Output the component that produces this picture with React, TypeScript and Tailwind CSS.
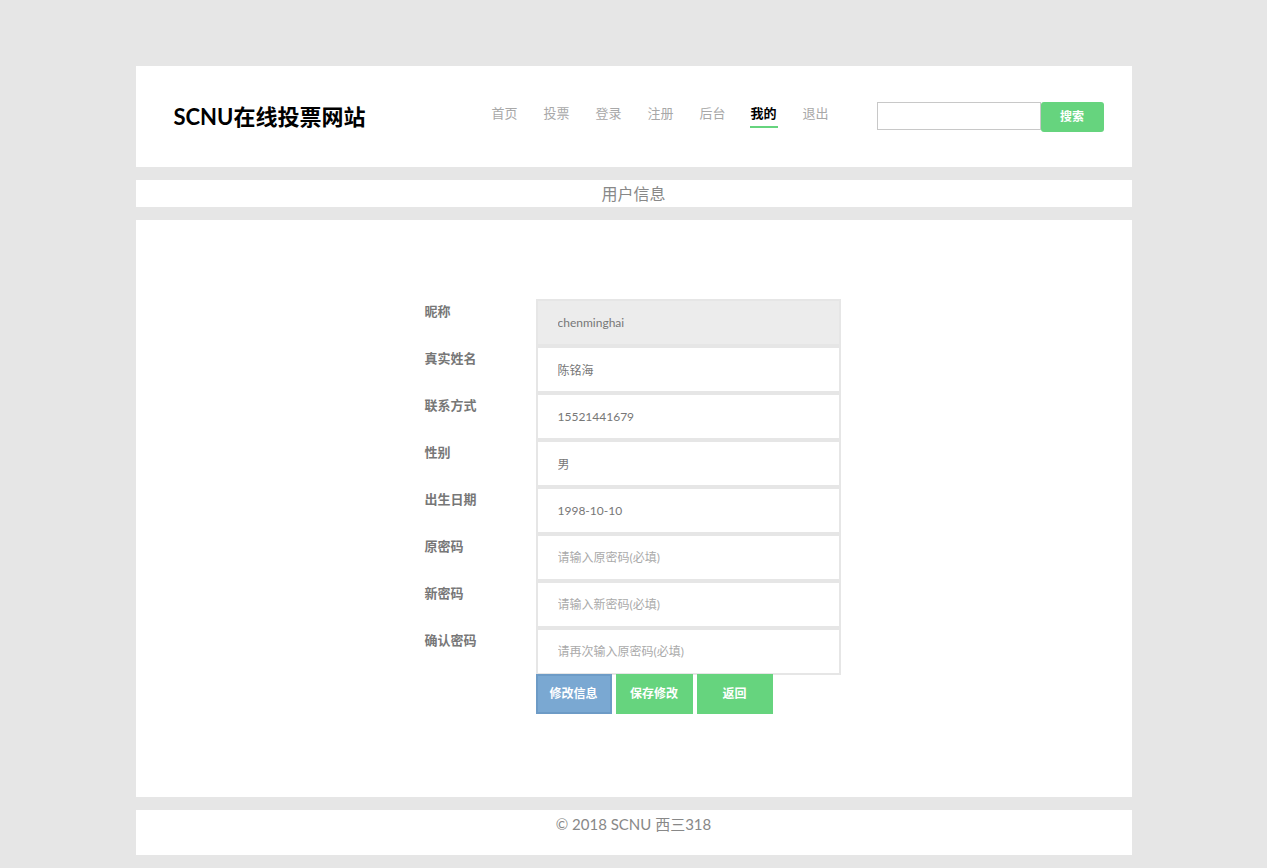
import React from "react";

const navItems = ["首页", "投票", "登录", "注册", "后台", "我的", "退出"];

const fields = [
    { label: "昵称", value: "chenminghai", readOnly: true },
    { label: "真实姓名", value: "陈铭海" },
    { label: "联系方式", value: "15521441679" },
    { label: "性别", value: "男" },
    { label: "出生日期", value: "1998-10-10" },
    { label: "原密码", placeholder: "请输入原密码(必填)" },
    { label: "新密码", placeholder: "请输入新密码(必填)" },
    { label: "确认密码", placeholder: "请再次输入原密码(必填)" },
];

export default function App() {
    return (
        <div
            className="min-h-[868px] bg-[#e6e6e6] pt-[66px] pb-[13px]"
            style={{ fontFamily: "Lato, 'Noto Sans CJK SC', sans-serif" }}
        >
            <div className="mx-auto w-[996px] flex flex-col gap-[13px]">
                {/* header */}
                <header className="h-[101px] bg-white flex items-center pl-[38px] pr-[28px]">
                    <h1 className="text-[22px] font-bold text-black w-[318px]">
                        SCNU在线投票网站
                    </h1>
                    <nav className="flex items-center gap-[26px] -mt-[6px]">
                        {navItems.map((item) => (
                            <a
                                key={item}
                                className={
                                    item === "我的"
                                        ? "text-[13px] font-bold text-black border-b-2 border-[#66d47e] pb-[3px] pt-[5px] px-[1px] -ml-[2px] -mr-[1px]"
                                        : "text-[13px] text-[#a8a8a8] py-[5px]"
                                }
                            >
                                {item}
                            </a>
                        ))}
                    </nav>
                    <div className="ml-auto flex items-start">
                        <input className="w-[164px] h-[28px] border border-[#c8c8c8] outline-none" />
                        <button className="w-[63px] h-[30px] bg-[#66d47e] rounded-[3px] text-white text-[12px] font-bold">
                            搜索
                        </button>
                    </div>
                </header>

                {/* title */}
                <div className="h-[27px] bg-white flex items-center justify-center text-[16px] text-[#888]">
                    用户信息
                </div>

                {/* form */}
                <main className="h-[577px] bg-white pt-[79px]">
                    <form className="ml-[289px] w-[417px]">
                        {fields.map((f) => (
                            <div key={f.label} className="flex h-[47px]">
                                <label className="w-[111px] pt-[3px] text-[13px] font-bold text-[#777]">
                                    {f.label}
                                </label>
                                <input
                                    readOnly={f.readOnly}
                                    defaultValue={f.value}
                                    placeholder={f.placeholder}
                                    className={
                                        "w-[305px] h-[47px] border-2 border-[#e6e6e6] pl-[20px] text-[12px] text-[#777] placeholder:text-[#aaa] outline-none " +
                                        (f.readOnly ? "bg-[#ececec] border-[#dcdcdc]" : "bg-white")
                                    }
                                />
                            </div>
                        ))}
                        <div className="flex gap-[4px] ml-[111px] mt-[-1px]">
                            <button
                                type="button"
                                className="w-[76px] h-[40px] bg-[#7aa8d2] border-2 border-[#6d9bc6] text-white text-[12px] font-bold"
                            >
                                修改信息
                            </button>
                            <button
                                type="button"
                                className="w-[77px] h-[40px] bg-[#66d47e] text-white text-[12px] font-bold"
                            >
                                保存修改
                            </button>
                            <button
                                type="button"
                                className="w-[76px] h-[40px] bg-[#66d47e] text-white text-[12px] font-bold"
                            >
                                返回
                            </button>
                        </div>
                    </form>
                </main>

                {/* footer */}
                <footer className="h-[45px] bg-white text-center text-[15px] text-[#888] pt-[3px]">
                    © 2018 SCNU 西三318
                </footer>
            </div>
        </div>
    );
}
